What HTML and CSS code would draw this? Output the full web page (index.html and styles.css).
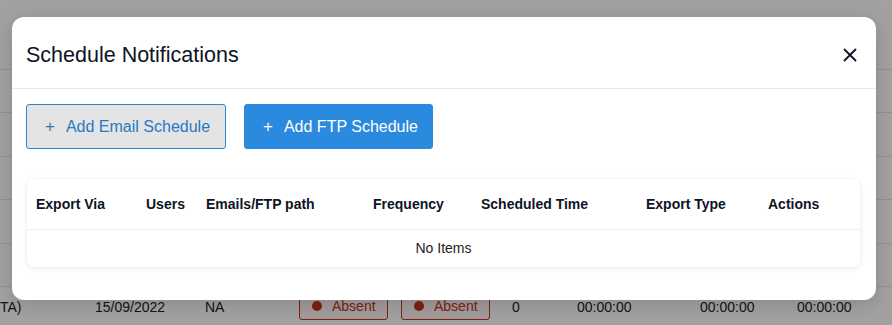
FILE: index.html
```html
<!DOCTYPE html>
<html>
<head>
<meta charset="utf-8">
<link rel="stylesheet" href="styles.css">
</head>
<body>
<div class="page">
  <div class="bg-rows">
    <div class="bg-row"></div>
    <div class="bg-row"></div>
    <div class="bg-row"></div>
    <div class="bg-row"></div>
    <div class="bg-row"></div>
    <div class="bg-row last">
      <span class="c c1">TA)</span>
      <span class="c c2">15/09/2022</span>
      <span class="c c3">NA</span>
      <span class="badge b1"><span class="dot"></span>Absent</span>
      <span class="badge b2"><span class="dot"></span>Absent</span>
      <span class="c c4">0</span>
      <span class="c c5">00:00:00</span>
      <span class="c c6">00:00:00</span>
      <span class="c c7">00:00:00</span>
    </div>
  </div>
</div>
<div class="overlay"></div>
<div class="modal">
  <div class="modal-header">
    <h2 class="modal-title">Schedule Notifications</h2>
    <button class="close" aria-label="Close">
      <svg width="14" height="14" viewBox="0 0 14 14"><path d="M1.5 1.5L12.5 12.5M12.5 1.5L1.5 12.5" stroke="#0f1424" stroke-width="1.8" stroke-linecap="round"/></svg>
    </button>
  </div>
  <div class="modal-body">
    <div class="actions">
      <button class="btn btn-outline"><span class="plus">+</span>Add Email Schedule</button>
      <button class="btn btn-primary"><span class="plus">+</span>Add FTP Schedule</button>
    </div>
    <div class="card">
      <table class="grid">
        <colgroup>
          <col style="width:110px"><col style="width:60px"><col style="width:167px"><col style="width:108px"><col style="width:165px"><col style="width:122px"><col>
        </colgroup>
        <thead>
          <tr><th>Export Via</th><th>Users</th><th>Emails/FTP path</th><th>Frequency</th><th>Scheduled Time</th><th>Export Type</th><th>Actions</th></tr>
        </thead>
        <tbody>
          <tr><td colspan="7" class="empty">No Items</td></tr>
        </tbody>
      </table>
    </div>
  </div>
</div>
</body>
</html>
```

FILE: styles.css
```css
* { box-sizing: border-box; }
html, body { margin: 0; padding: 0; }
body {
  width: 892px;
  height: 325px;
  overflow: hidden;
  background: #ffffff;
  font-family: "Liberation Sans", Arial, sans-serif;
  position: relative;
}
.page { width: 892px; height: 325px; }
.bg-rows { padding-top: 69px; }
.bg-row {
  height: 43.4px;
  border-top: 1px solid #e6e6e6;
  position: relative;
}
.bg-row.last {
  font-size: 14px;
  color: #222;
}
.c { position: absolute; top: 12px; }
.c1 { left: 0; }
.c2 { left: 95px; }
.c3 { left: 205px; }
.c4 { left: 512px; }
.c5 { left: 577px; }
.c6 { left: 700px; }
.c7 { left: 797px; }
.badge {
  position: absolute;
  top: 5px;
  height: 28px;
  width: 89px;
  border: 1px solid #cc3322;
  border-radius: 3px;
  color: #c8321f;
  background: #fff5f4;
  display: flex;
  align-items: center;
  padding-left: 12px;
  font-size: 14px;
}
.b1 { left: 299px; }
.b2 { left: 401px; }
.dot {
  width: 10px; height: 10px; border-radius: 50%;
  background: #c8321f;
  margin-right: 10px;
}
.overlay {
  position: absolute;
  inset: 0;
  background: rgba(0, 0, 0, 0.37);
}
.modal {
  position: absolute;
  left: 12px;
  top: 17px;
  width: 864px;
  height: 283px;
  background: #fff;
  border-radius: 12px;
  box-shadow: 0 4px 18px rgba(0,0,0,0.15);
  display: flex;
  flex-direction: column;
}
.modal-header {
  height: 72px;
  border-bottom: 1px solid #e8e8e8;
  display: flex;
  align-items: center;
  justify-content: space-between;
  padding: 5px 19px 0 14px;
}
.modal-title {
  margin: 0;
  font-size: 21.5px;
  font-weight: 400;
  color: #0f1424;
}
.close {
  border: 0;
  background: none;
  padding: 0;
  width: 14px;
  height: 14px;
  display: flex;
  cursor: pointer;
}
.modal-body {
  padding: 15px 16px 0 14px;
}
.actions {
  display: flex;
  gap: 18px;
}
.btn {
  height: 45px;
  border-radius: 3px;
  font-family: "Liberation Sans", Arial, sans-serif;
  font-size: 16px;
  display: flex;
  align-items: center;
  padding: 0 0 0 18px;
  white-space: nowrap;
  cursor: pointer;
}
.plus {
  font-size: 17px;
  margin-right: 11px;
  font-weight: 300;
}
.btn-outline {
  width: 200px;
  background: #e4e4e4;
  border: 1px solid #2b84d4;
  color: #2a78c4;
}
.btn-primary {
  width: 189px;
  background: #2a8add;
  border: 1px solid #2a8add;
  color: #fff;
}
.card {
  margin-top: 30px;
  margin-left: 1px;
  background: #fff;
  border-radius: 7px;
  box-shadow: 0 1px 6px rgba(0,0,0,0.09);
  overflow: hidden;
}
.grid {
  width: 100%;
  border-collapse: collapse;
  table-layout: fixed;
}
.grid th {
  height: 50px;
  text-align: left;
  font-size: 14px;
  font-weight: 700;
  color: #0f1424;
  padding: 0 0 0 9px;
  border-bottom: 1px solid #efefef;
}
.grid td.empty {
  height: 38px;
  text-align: center;
  font-size: 14px;
  color: #222;
}
```
